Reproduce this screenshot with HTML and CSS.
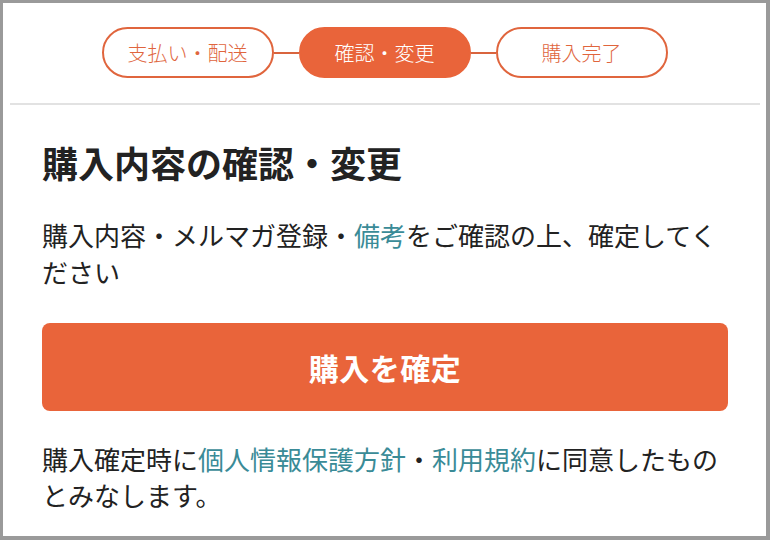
FILE: index.html
```html
<!DOCTYPE html>
<html lang="ja">
<head>
<meta charset="utf-8">
<title>購入内容の確認・変更</title>
<link rel="stylesheet" href="styles.css">
</head>
<body>
<div class="frame">
  <nav class="stepper">
    <span class="step">支払い・配送</span>
    <span class="connector"></span>
    <span class="step step-active">確認・変更</span>
    <span class="connector"></span>
    <span class="step">購入完了</span>
  </nav>
  <hr class="divider">
  <main class="content">
    <h1 class="title">購入内容の確認・変更</h1>
    <p class="lead">購入内容・メルマガ登録・<a class="link" href="#">備考</a>をご確認の上、確定してください</p>
    <button class="confirm" type="button">購入を確定</button>
    <p class="note">購入確定時に<a class="link" href="#">個人情報保護方針</a>・<a class="link" href="#">利用規約</a>に同意したものとみなします。</p>
  </main>
</div>
</body>
</html>
```

FILE: styles.css
```css
html, body {
  margin: 0;
  padding: 0;
}
body {
  background: #9a9a9a;
  font-family: "Noto Sans CJK JP", "Noto Sans", sans-serif;
  color: #222;
}
.frame {
  background: #fff;
  margin: 3px 4px 0 3px;
  height: 533px;
  overflow: hidden;
}
.stepper {
  display: flex;
  justify-content: center;
  align-items: center;
  padding-top: 24px;
}
.step {
  box-sizing: border-box;
  width: 172px;
  height: 51px;
  border: 2px solid #e0653d;
  border-radius: 26px;
  display: flex;
  align-items: center;
  justify-content: center;
  font-size: 20px;
  font-weight: 300;
  color: #e0653d;
  background: #fff;
}
.step-active {
  background: #e9643a;
  border-color: #e9643a;
  color: #fff;
}
.connector {
  width: 25px;
  height: 2px;
  background: #d9643e;
}
.divider {
  border: 0;
  height: 2px;
  background: #e2e2e2;
  margin: 25px 6px 0 7px;
}
.content {
  padding: 0 38px 0 39px;
}
.title {
  margin: 32px 0 0;
  font-size: 36px;
  line-height: 50px;
  font-weight: 700;
  color: #222;
}
.lead {
  margin: 29px 0 0;
  font-size: 26px;
  line-height: 37px;
}
.link {
  color: #3a8b97;
  text-decoration: none;
}
.confirm {
  display: block;
  width: 100%;
  height: 88px;
  margin: 33px 0 0;
  border: 0;
  border-radius: 8px;
  background: #e9643a;
  color: #fff;
  font-family: inherit;
  font-size: 30px;
  font-weight: 700;
  letter-spacing: 0.5px;
}
.note {
  margin: 30px 0 0;
  font-size: 26px;
  line-height: 36px;
}
```
